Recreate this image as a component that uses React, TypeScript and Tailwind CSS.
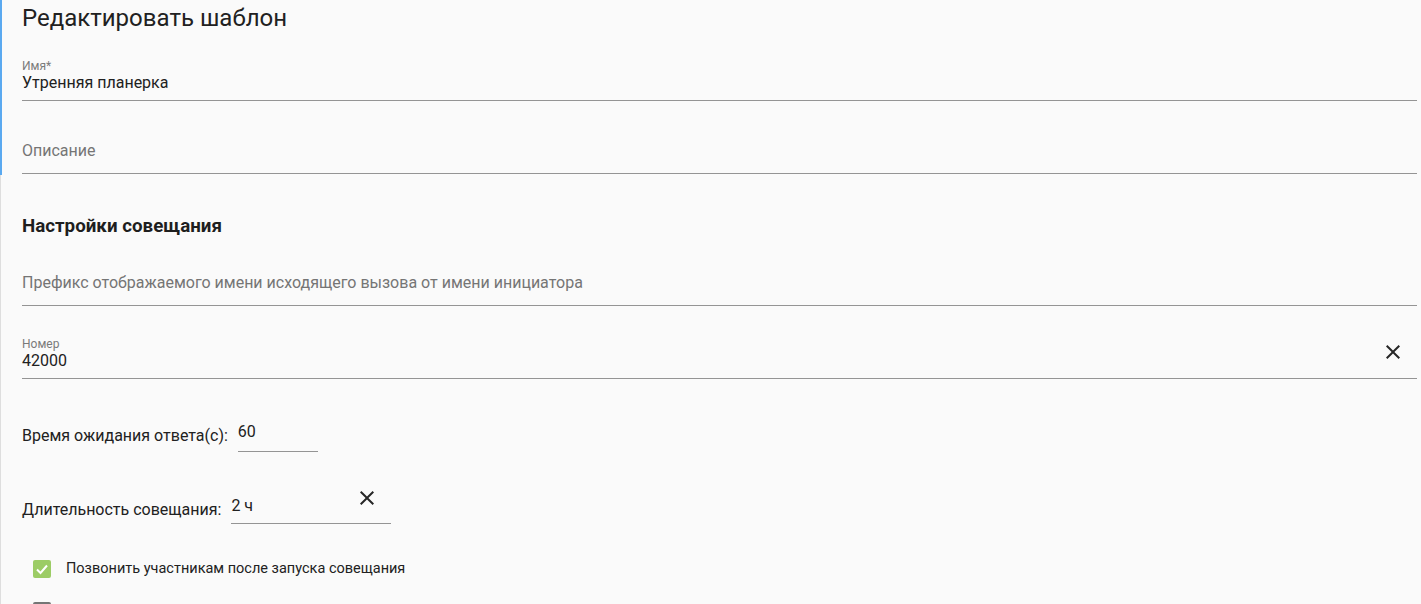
import React from "react";

const CloseIcon = () => (
  <svg width="24" height="24" viewBox="0 0 24 24" className="block">
    <path
      fill="#262626"
      d="M19 6.41L17.59 5 12 10.59 6.41 5 5 6.41 10.59 12 5 17.59 6.41 19 12 13.41 17.59 19 19 17.59 13.41 12z"
    />
  </svg>
);

const Checkbox = ({ checked }: { checked: boolean }) =>
  checked ? (
    <div className="w-[18px] h-[18px] rounded-[2px] bg-[#9ccc65] flex items-center justify-center shrink-0">
      <svg width="18" height="18" viewBox="0 0 18 18">
        <path d="M4 9.5 L7.5 13 L14 5.5" fill="none" stroke="#ffffff" strokeWidth="2" />
      </svg>
    </div>
  ) : (
    <div className="w-[18px] h-[18px] rounded-[2px] border-2 border-[#757575] shrink-0" />
  );

export default function App() {
  return (
    <div
      className="w-[1421px] h-[604px] overflow-hidden bg-[#fafafa] flex text-[#212121]"
      style={{ fontFamily: "Roboto, 'Noto Sans', sans-serif" }}
    >
      <div className="w-[2px] flex flex-col shrink-0">
        <div className="h-[175px] bg-[#5aa9f0]" />
        <div className="flex-1 flex">
          <div className="w-[1px] bg-[#dedede]" />
        </div>
      </div>
      <div className="flex-1 pl-[20px] pr-[4px] flex flex-col">
        <div className="h-[36px] text-[24px] leading-[36px] text-[#212121]">Редактировать шаблон</div>

        <div className="mt-[23px] border-b border-[#949494] pb-[7px]">
          <div className="text-[12px] leading-[14px] text-[#7a7a7a]">Имя*</div>
          <div className="text-[16px] leading-[20px]">Утренняя планерка</div>
        </div>

        <div className="mt-[40px] border-b border-[#949494] pb-[12px]">
          <div className="text-[16px] leading-[20px] text-[#757575]">Описание</div>
        </div>

        <div className="mt-[40px] text-[18.75px] leading-[24px] font-bold text-[#1e1e1e]">Настройки совещания</div>

        <div className="mt-[35px] border-b border-[#949494] pb-[12px]">
          <div className="text-[16px] leading-[20px] text-[#757575]">
            Префикс отображаемого имени исходящего вызова от имени инициатора
          </div>
        </div>

        <div className="mt-[31px] border-b border-[#949494] pb-[7px] flex items-start">
          <div className="flex-1">
            <div className="text-[12px] leading-[14px] text-[#7a7a7a]">Номер</div>
            <div className="text-[16px] leading-[20px]">42000</div>
          </div>
          <div className="mt-[3px] mr-[12px]">
            <CloseIcon />
          </div>
        </div>

        <div className="mt-[43px] flex items-end gap-[10px]">
          <div className="text-[16px] leading-[20px] mb-[6px]">Время ожидания ответа(с):</div>
          <div className="w-[80px] border-b border-[#949494] pb-[9px]">
            <div className="text-[16px] leading-[20px]">60</div>
          </div>
        </div>

        <div className="mt-[34px] flex items-end gap-[10px]">
          <div className="text-[16px] leading-[20px] mb-[4px]">Длительность совещания:</div>
          <div className="w-[160px] border-b border-[#949494] pb-[7px] flex items-start">
            <div className="flex-1 mt-[10px] text-[16px] leading-[20px]">2 ч</div>
            <div className="mr-[12px]">
              <CloseIcon />
            </div>
          </div>
        </div>

        <div className="mt-[33px] h-[24px] flex items-center pl-[11px] shrink-0">
          <Checkbox checked />
          <div className="ml-[15px] text-[14.5px] leading-[20px]">Позвонить участникам после запуска совещания</div>
        </div>

        <div className="mt-[18px] h-[24px] flex items-center pl-[11px] shrink-0">
          <Checkbox checked={false} />
        </div>
      </div>
    </div>
  );
}
